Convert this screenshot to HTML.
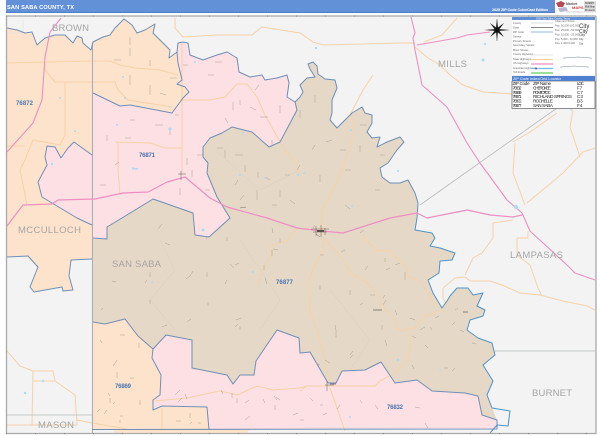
<!DOCTYPE html>
<html><head><meta charset="utf-8"><style>
html,body{margin:0;padding:0;background:#fff;width:600px;height:436px;overflow:hidden}
svg{display:block;filter:blur(.3px)}
text{font-family:"Liberation Sans",sans-serif}
</style></head><body>
<svg width="600" height="436" viewBox="0 0 600 436" xmlns="http://www.w3.org/2000/svg">
<rect width="600" height="436" fill="#fff"/>
<rect x="6" width="549" height="12" fill="#6391d8"/>
<rect x="6" y="12" width="549" height="1" fill="#4f7fc8"/>
<text x="7" y="9" font-size="5.6" font-weight="bold" fill="#fff" textLength="67">SAN SABA COUNTY, TX</text>
<text x="492" y="11" font-size="3.8" font-weight="bold" fill="#fff" textLength="56">2025 ZIP Code ColorCast Edition</text>
<!-- map bg -->
<rect x="7" y="16" width="589" height="417" fill="#f3f3f3"/>
<!-- peach -->
<path fill="#fde3cc" d="M7,28L17,30 25,33 32,32 37,45 45,38 55,35 65,35 73,43 77,36 82,38 83,43 91,50 93,42 103,37 110,35 115,28 124,19 132,25 137,33 145,30 155,24 153,33 163,43 170,50 169,58 177,52 178,43 183,42 178,63 182,80 177,84 185,87 189,92 183,98 172,113 130,105 120,106 93,93 92,155 92,259 71,260 69,276 73,290 63,291 62,287 34,292 30,287 38,267 28,256 7,257Z"/>
<path fill="#fde3cc" d="M93,322L105,324 125,319 138,336 153,349 152,358 161,375 160,395 153,400 153,410 162,406 207,407 209,430 248,430 248,433 114,433 114,430 92,430Z"/>
<!-- pink -->
<path fill="#fde0e3" d="M178,43L183,42 188,43 190,55 203,60 217,55 227,52 237,58 239,72 250,77 262,75 265,80 277,78 287,75 289,83 287,97 295,102 297,110 280,142 269,147 252,132 232,127 222,133 210,138 203,147 203,157 208,163 207,173 217,197 230,218 209,237 195,235 193,213 153,199 122,218 107,227 107,239 93,238 92,225 77,218 52,203 42,197 38,182 47,165 45,157 47,146 55,147 61,158 68,148 74,142 92,155 93,93 120,106 130,105 172,113 183,98 189,92 185,87 177,84 182,80 178,63 177,52Z"/>
<path fill="#fde0e3" d="M153,349L166,335 192,340 192,368 227,375 233,384 240,375 254,375 256,361 277,330 299,338 300,353 310,352 328,383 336,383 342,371 365,370 381,362 395,383 417,380 432,391 465,393 478,396 482,415 497,420 497,429 209,430 207,407 162,406 153,410 153,400 160,395 161,375 152,358Z"/>
<!-- brown -->
<path id="b" fill="#e6d8c7" d="M295,102L300,97 303,92 300,85 307,78 315,77 310,69 308,64 313,62 317,66 318,74 325,79 335,80 337,88 332,100 332,113 330,120 337,128 345,120 352,113 362,107 365,113 372,115 372,123 367,132 372,138 380,137 377,147 387,142 400,137 404,142 397,150 388,163 380,168 382,177 390,183 400,183 408,180 415,193 418,203 417,218 415,230 432,233 435,238 430,246 440,248 455,253 452,260 440,261 439,273 428,280 433,293 442,308 447,301 450,296 457,288 463,288 468,288 473,295 483,293 477,306 485,310 483,316 470,320 467,330 478,338 492,343 495,355 483,365 493,381 487,395 492,408 497,420 482,415 478,396 465,393 432,391 417,380 395,383 381,362 365,370 342,371 336,383 328,383 310,352 300,353 299,338 277,330 256,361 254,375 240,375 233,384 227,375 192,368 192,340 166,335 153,349 138,336 125,319 105,324 93,322 93,238 107,239 107,227 122,218 153,199 193,213 195,235 209,237 230,218 217,197 207,173 208,163 203,157 203,147 210,138 222,133 232,127 252,132 269,147 280,142 297,110Z"/>
<!-- faint lines -->
<g fill="none" stroke="#dccdbc" stroke-width=".5"><path d="M160,240L175,270 150,300 175,330M240,240L280,300 260,330M215,150L260,190 300,170M330,290L370,340 350,370"/></g>
<!-- peach roads -->
<g fill="none" stroke="#f5d2a8" stroke-width="1">
<path d="M7,63L92,61 110,61 120,65 135,68 160,70 178,75M45,63L45,70 55,82 115,82 118,90 128,100 172,107M65,82L65,135 60,145 33,140 25,160 20,170 27,205M7,146L25,146M183,98L183,100 210,100 225,97 237,84 247,84 257,97 265,115 275,133 285,150 298,165 300,185M182,42L182,175M115,142L150,143 165,148 182,148M118,142L118,170 120,195"/>
<path d="M175,18L175,28 183,37 217,35 252,35 262,27 300,33 313,42 323,45 400,43 415,43M415,47L428,58 440,65 450,75 463,85 483,92 513,94M457,18L442,35 424,42M373,75L363,90 350,115 353,120 352,140 338,180 322,210 322,235"/>
<path d="M323,238L323,251 313,268 308,285 310,311 320,341 328,375 330,383M323,238L340,255 353,275 368,283 380,298 382,306 392,315 397,328 402,331 410,328 410,351 407,361 395,373 380,381 375,386 307,386 300,391M330,388L345,431M362,235L377,251 388,250 407,268 407,276 420,281 432,300 440,307M440,311L425,316 413,330"/>
<path d="M465,275L473,258 482,253 493,238 493,223 513,220M443,288L455,278 465,277 470,281 490,281 502,285 520,293 540,295 563,301 587,306 595,310M443,288L443,298 447,305M517,238L517,255 530,265 538,288 542,296M528,231L528,238 517,238M513,142L530,132 557,113M515,143L513,173 525,205M527,203L563,173 583,152 595,148M570,127L580,157M573,110L570,127"/>
<path d="M7,351L20,366 33,371 53,371 55,381 75,395 77,425M33,371L32,425M33,381L55,381M7,425L77,425M77,420L92,423 127,429M162,408L162,431M155,401L187,398 220,391 237,395 257,386 273,390 300,388 307,386M258,285L262,270 272,255 272,245 287,241 297,228"/>
</g>
<!-- county lines -->
<g fill="none" stroke="#b9bbbd" stroke-width=".8">
<path d="M92.500,43V433" stroke="#a9afb8" stroke-width="1.100"/>
<path d="M420,205L557,108M495,351H595M7,415H92M92,429.500H250M7,420V420"/>
<path d="M8,33H23V20" stroke="#dcdcdc" stroke-width=".5"/>
</g>
<!-- boundaries -->
<g fill="none" stroke="#6f8fb5" stroke-width="1" stroke-linejoin="round">
<path d="M7,28L17,30 25,33 32,32 37,45 45,38 55,35 65,35 73,43 77,36 82,38 83,43 91,50 93,42 103,37 110,35 115,28 124,19 132,25 137,33 145,30 155,24 153,33 163,43 170,50 169,58 177,52 178,43 183,42 188,43 190,55 203,60 217,55 227,52 237,58 239,72 250,77 262,75 265,80 277,78 287,75 289,83 287,97 295,102 300,97 303,92 300,85 307,78 315,77 310,69 308,64 313,62 317,66 318,74 325,79 335,80 337,88 332,100 332,113 330,120 337,128 345,120 352,113 362,107 365,113 372,115 372,123 367,132 372,138 380,137 377,147 387,142 400,137 404,142 397,150 388,163 380,168 382,177 390,183 400,183 408,180 415,193 418,203 417,218"/>
<path d="M177,52L178,63 182,80 177,84 185,87 189,92 183,98 172,113 130,105 120,106 93,93"/>
<path d="M92,155L74,142 68,148 61,158 55,147 47,146 45,157 47,165 38,182 42,197 52,203 77,218 92,225M93,238L107,239 107,227 122,218 153,199 193,213 195,235 209,237 230,218 217,197 207,173 208,163 203,157 203,147 210,138 222,133 232,127 252,132 269,147 280,142 297,110 295,102"/>
<path d="M7,257L28,256 38,267 30,287 34,292 62,287 63,291 73,290 69,276 71,260 92,259"/>
<path d="M93,322L105,324 125,319 138,336 153,349 166,335 192,340 192,368 227,375 233,384 240,375 254,375 256,361 277,330 299,338 300,353 310,352 328,383 336,383 342,371 365,370 381,362 395,383 417,380 432,391 465,393 478,396 482,415 497,420 497,429 92,429.500"/>
<path d="M153,349L152,358 161,375 160,395 153,400 153,410 162,406 207,407 209,430"/>
<path stroke="#4f93c9" d="M417,218L415,230 432,233 435,238 430,246 440,248 455,253 452,260 440,261 439,273 428,280 433,293 442,308 447,301 450,296 457,288 463,288 468,288 473,295 483,293 477,306 485,310 483,316 470,320 467,330 478,338 492,343 495,355 483,365 493,381 487,395 492,408 510,411 508,426 497,425 490,433"/>
</g>
<!-- pink roads -->
<g fill="none" stroke="#ee8fc0" stroke-width="1.100" stroke-linejoin="round">
<path d="M411,17L415,33 413,38 415,50 422,85 447,107 467,143 480,163 507,200 522,213 530,231 567,265 575,273 595,280"/>
<path d="M417,45L457,38 467,35 490,32"/>
<path d="M61,18L50,32 45,57 42,100 33,123 7,152"/>
<path d="M7,226L13,218 23,205 52,204 58,200 95,199 123,193 148,192 167,182 185,177 197,187 210,198 227,207 267,218 297,228 322,231 343,233 390,218 417,213 427,218 467,210 490,215 513,217 522,215" stroke-width="1.200"/>
</g>
<!-- town -->
<g fill="none" stroke="#6d6159" stroke-width=".5">
<path d="M311,229H329M316,226V236M321,225V237M325,228V235M313,232H327M178,174H186M181,171V180M325,385H334M327,381V391M240,208L246,207M316,234L320,237"/>
</g>
<path d="M317,230h7v2h-7z" fill="#5d5048"/>
<!-- ticks -->
<g fill="none" stroke="#a89f93" stroke-width=".5">
<path d="M130,37V45M130,48V56M150,60V66M114,60h7M170,78h7M130,75V85M150,85V95M160,93l6,2M183,65h5M215,62h7M208,75h6M240,100V105M250,107l6,3M260,117h8M255,90l4,-5M280,105V113M233,102V110M225,118l3,5"/>
<path d="M107,135V141M125,138h6M155,125h8M170,130V135M175,115h4M130,120h5M115,165l4,-3M100,185h6M187,158V165M197,155h6M192,170V177M205,190h5M180,188V195"/>
<path d="M225,150V158M217,148h6M235,155h8M245,165V172M258,172V178M235,185l3,-5M270,180l-5,-3M285,175h5M280,190V197M257,190V200M272,205h5M240,200l4,-5M290,200l5,4M300,165l-3,5M320,175V182M345,170h6M340,150h6M315,145l-3,5M360,145V152M360,125h7M345,205l5,4M375,190h5M385,155h-5M300,110V118M315,95V103M332,140l-6,2M272,140V146"/>
<path d="M162,224l-4,5M170,245l-5,-2M208,236l-2,3M227,237V241M272,228l1,5M280,238V243M278,250l-5,-1M272,250V256M235,265l4,-2M193,271l-3,5M190,276l-4,3M207,272V277M234,268l-4,-4M264,270V265M225,284l2,-4M265,278l2,6M150,272V277M147,280l-2,3M116,282l-4,-1M150,300V304M208,302V306M187,322l4,-3M162,327l5,-2M101,310l2,-2M236,320l5,-2M235,327l3,-3M240,326V330"/>
<path d="M120,335h5M100,340l2,3M139,343V348M117,360l-4,6M117,372V378M130,378h4M108,393l2,3M110,398V403M113,404l2,-2M140,400V405M100,409l-3,3M107,410l-3,4M120,416h3M120,420V423M190,413V418M192,422l-2,2M198,423h3M176,421h5"/>
<path d="M175,395l5,-5M178,402l4,-4M185,394l2,5M221,390l2,4M232,393V398M237,398V403M245,403l4,-3M265,403l-2,-4M274,396l3,4M275,405V410M280,400l-4,-3M293,415l5,-2M245,420l5,-4"/>
<path d="M315,225l-2,3M360,233l4,-3M345,250l-4,2M320,255h4M320,285V290M350,290V295M365,270l3,-4M386,270l4,-2M395,265l5,-2M385,258V262M405,272V280M385,295l-2,3M370,295h5M360,305l3,-2M383,305l3,-5M395,310l2,5M382,325V330M410,318l5,2M420,330l5,-3M430,327l2,3M412,336l4,2M385,340l2,6M335,325l1,5M336,330V338M350,355l3,-4M350,358l3,-3M435,318l4,-2M458,308l-3,2M455,322l-3,3M460,330l4,2M472,343l4,1M425,345l3,3M455,368l-3,3M448,368h-4M412,365l2,4M325,360l5,3M320,365l-4,-2M300,420h4M310,398l3,3M320,405h3M323,415l4,-2M340,405l-3,4M360,400l2,3M375,405l3,4M415,407l5,1M425,423l3,5"/>
<path d="M373,310H382M463,312h5M330,384h6" stroke="#6d6159" stroke-width=".8"/>
</g>
<!-- water -->
<g fill="#a9dcf2">
<circle cx="123" cy="77" r="1"/><circle cx="125" cy="98" r="1"/><circle cx="60" cy="98" r="1"/><circle cx="75" cy="131" r="1"/><circle cx="117" cy="125" r="1"/><circle cx="133" cy="168" r=".9"/><rect x="132" y="168" width="6" height="1.500"/><circle cx="52" cy="164" r="1.200"/><circle cx="170" cy="129" r="1.500"/><circle cx="195" cy="62" r="1"/><circle cx="243" cy="133" r="1"/><circle cx="240" cy="175" r="1"/><circle cx="265" cy="178" r="1"/><circle cx="203" cy="230" r="1.500"/><circle cx="152" cy="282" r="1"/><circle cx="253" cy="272" r="1"/><circle cx="43" cy="381" r="1.200"/><circle cx="25" cy="393" r="1.200"/><circle cx="298" cy="175" r="1.200"/><circle cx="304" cy="173" r="1"/><circle cx="352" cy="206" r="1"/><circle cx="398" cy="171" r="1"/><circle cx="351" cy="130" r="1"/><circle cx="483" cy="60" r="1.500"/><circle cx="485" cy="44" r="1.200"/><circle cx="516" cy="207" r="2"/><circle cx="398" cy="360" r="1.200"/><circle cx="350" cy="417" r="1"/><circle cx="440" cy="370" r=".8"/><circle cx="316" cy="48" r="1.200"/><circle cx="571" cy="110" r=".8"/>
</g>
<!-- labels -->
<g fill="#a5a5a5" font-size="9.500">
<text x="52" y="31" textLength="37">BROWN</text>
<text x="438" y="67" textLength="29">MILLS</text>
<text x="18" y="233" textLength="63">MCCULLOCH</text>
<text x="112" y="267" textLength="49">SAN SABA</text>
<text x="38" y="428" textLength="36">MASON</text>
<text x="510" y="258" textLength="53">LAMPASAS</text>
<text x="532" y="396" textLength="40">BURNET</text>
</g>
<g fill="#4a75ae" font-size="6" font-weight="bold">
<text x="16" y="105" textLength="17">76872</text>
<text x="139" y="157" textLength="16">76871</text>
<text x="276" y="284" textLength="17">76877</text>
<text x="115" y="388" textLength="16">76869</text>
<text x="387" y="409" textLength="16">76832</text>
</g>
<!-- compass -->
<g fill="#111">
<path d="M497,19L498,29 497,41 496,29Z" stroke="#222" stroke-width=".2"/>
<path d="M484,30L497,29 510,30 497,31Z"/>
<path d="M490,23L498,29 504,37 496,31Z"/>
<path d="M504,23L498,31 490,37 496,29Z"/>
</g>
<!-- frame -->
<g fill="none" stroke="#a9a9a9">
<path d="M6.500,433.500V16M6,16H596M596,16V434M6,433.500H596" stroke-width="1.300"/>
</g>
<path fill="none" stroke="#666" stroke-width=".8" stroke-dasharray="1 28" d="M6,16H596M6,433.500H596"/>
<!-- legend -->
<rect x="512" y="17" width="83" height="58" fill="#fff"/>
<rect x="512" y="17" width="83" height="3" fill="#5f8fd6"/>
<text x="536" y="19.700" font-size="2.400" fill="#fff" textLength="34">2025 San Saba County, Texas</text>
<g font-size="2.600" fill="#666">
<text x="513" y="24">County</text><text x="513" y="28.500">State</text><text x="513" y="33">ZIP Code</text><text x="513" y="37.500">Streets</text><text x="513" y="42">Primary Streets</text><text x="513" y="46">Secondary Streets</text><text x="513" y="51">Minor Streets</text><text x="513" y="55">County Highways</text><text x="513" y="60">State Highways</text><text x="513" y="64">US Highways</text><text x="513" y="69">Interstate Highways</text><text x="513" y="73">Toll Roads</text>
<text x="555" y="22">Cities and Towns</text><text x="555" y="26.500">Pop. 50,000-100,000</text><text x="555" y="31">Pop. 25,000 - 50,000</text><text x="555" y="35.500">Pop. 10,000 - 25,000</text><text x="555" y="40">Pop. 5,000 - 10,000</text><text x="555" y="44">Pop. 1,000-5,000</text>
</g>
<g fill="#333"><text x="579" y="28" font-size="6">City</text><text x="579" y="33" font-size="5">City</text><text x="579" y="36" font-size="3.500">City</text><text x="579" y="40" font-size="2.600">City</text><text x="579" y="44.500" font-size="2.400">City</text></g>
<g fill="none">
<path d="M531,23H553" stroke="#ddd" stroke-width="1"/>
<path d="M531,27.500H553" stroke="#888" stroke-width="1"/>
<path d="M531,32H553" stroke="#b9cfe8" stroke-width="1.500"/>
<path d="M531,55H553" stroke="#ddd" stroke-width=".7"/>
<path d="M531,59.500H553" stroke="#f5cfa2" stroke-width="1"/>
<path d="M531,64H553" stroke="#ee8fc0" stroke-width="1.300"/>
<path d="M531,68.500H553" stroke="#6cc0ea" stroke-width="1.200"/>
<path d="M531,73H553" stroke="#8edb8e" stroke-width="1.800"/>
<path d="M564,59V58L578,57 591,58V59M561,68V67L574,66 588,67V68" stroke="#7c8fa8" stroke-width=".6"/>
</g>
<circle cx="536" cy="68.500" r="1" fill="#9a3f78"/>
<!-- zip table -->
<rect x="512" y="81" width="83" height="27.500" fill="#fff" stroke="#444" stroke-width=".6"/>
<rect x="512" y="76" width="83" height="5" fill="#4f7fd0"/>
<text x="513" y="80" font-size="3.800" fill="#fff" textLength="48">ZIP Code Index/Grid Locator</text>
<g font-size="4.600" fill="#222">
<text x="512.500" y="85" textLength="17">ZIP Code</text><text x="533" y="85" textLength="18">ZIP Name</text><text x="577" y="85" textLength="7">LOC</text>
<text x="512.500" y="89.500" textLength="9">76832</text><text x="533" y="89.500" textLength="18">CHEROKEE</text><text x="577" y="89.500">F7</text>
<text x="512.500" y="94" textLength="9">76869</text><text x="533" y="94" textLength="18">PONTOTOC</text><text x="577" y="94">C7</text>
<text x="512.500" y="98" textLength="9">76871</text><text x="533" y="98" textLength="39">RICHLAND SPRINGS</text><text x="577" y="98">C3</text>
<text x="512.500" y="102.500" textLength="9">76872</text><text x="533" y="102.500" textLength="20">ROCHELLE</text><text x="577" y="102.500">B3</text>
<text x="512.500" y="107" textLength="9">76877</text><text x="533" y="107" textLength="20">SAN SABA</text><text x="577" y="107">F4</text>
</g>
<!-- logo -->
<rect x="555" y="0" width="45" height="14" fill="#fff"/>
<path d="M556,3L561,1 565,3 563,7 558,7Z" fill="#b74a5a"/>
<path d="M558,8L566,7 568,11 560,12Z" fill="#b9b5d8"/>
<text x="566" y="5" font-size="3.500" font-weight="bold" fill="#555">Market</text>
<text x="572" y="9" font-size="4" font-weight="bold" fill="#d4363b">MAPS</text>
<text x="566" y="12.500" font-size="2" fill="#888">www.marketmaps.com</text>
<rect x="584" y="1" width="12" height="11.500" fill="#ddd"/>
<g font-size="2.300" fill="#555" font-weight="bold"><text x="585" y="4">SUMMIT</text><text x="585" y="7.500">Wall Map</text><text x="585" y="11">Products</text></g>
</svg>
</body></html>
